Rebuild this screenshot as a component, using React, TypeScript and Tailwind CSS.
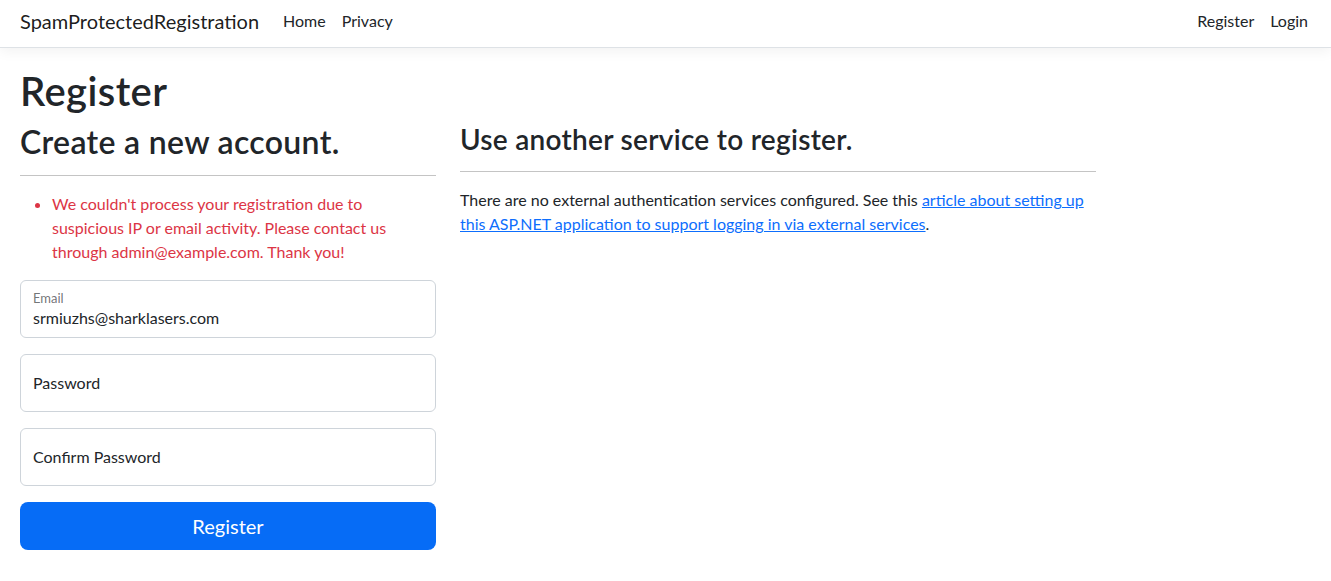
import React from 'react';

const font = { fontFamily: 'Lato, "Noto Sans", "Liberation Sans", sans-serif' };

const FloatingInput: React.FC<{ label: string; value?: string }> = ({ label, value }) => {
    if (value) {
        return (
            <div className="h-[58px] rounded-md border border-[#ced4da] bg-white px-3 pt-[9px]">
                <div className="text-[13px] leading-[16px] text-[#212529a6]">{label}</div>
                <div className="text-base leading-[24px] text-[#212529]">{value}</div>
            </div>
        );
    }
    return (
        <div className="flex h-[58px] items-center rounded-md border border-[#ced4da] bg-white px-3">
            <span className="text-base text-[#212529]">{label}</span>
        </div>
    );
};

export default function App() {
    return (
        <div className="min-h-screen bg-white text-[#212529]" style={font}>
            {/* Navbar */}
            <header className="flex h-[48px] items-center justify-between border-b border-[#dee2e6] bg-white pb-[5px] pl-5 pr-[15px] shadow-[0_4px_12px_rgba(0,0,0,0.05)]">
                <div className="flex items-center">
                    <span className="mr-4 text-[20px] text-black/90">SpamProtectedRegistration</span>
                    <nav className="flex">
                        <a className="px-2 text-base text-[#212529]">Home</a>
                        <a className="px-2 text-base text-[#212529]">Privacy</a>
                    </nav>
                </div>
                <nav className="flex">
                    <a className="px-2 text-base text-[#212529]">Register</a>
                    <a className="px-2 text-base text-[#212529]">Login</a>
                </nav>
            </header>

            <main className="px-5 pt-[19px]">
                <h1 className="text-[40px] font-semibold leading-[48px] tracking-[0.01em]">Register</h1>
                <div className="mt-2 flex gap-6">
                    {/* Left column */}
                    <div className="w-[416px] shrink-0">
                        <h2 className="text-[32px] font-semibold leading-[38px] tracking-[0.01em]">
                            Create a new account.
                        </h2>
                        <hr className="mt-[14px] border-t border-[#c4c4c4]" />
                        <ul className="mt-4 list-disc pl-8 text-base leading-6 text-[#dc3545] marker:text-[#dc3545]">
                            <li>
                                We couldn't process your registration due to suspicious IP or email
                                activity. Please contact us through admin@example.com. Thank you!
                            </li>
                        </ul>
                        <div className="mt-4 flex flex-col gap-4">
                            <FloatingInput label="Email" value="srmiuzhs@sharklasers.com" />
                            <FloatingInput label="Password" />
                            <FloatingInput label="Confirm Password" />
                            <button className="h-12 w-full rounded-lg bg-[#066cf6] text-[20px] text-white">
                                Register
                            </button>
                        </div>
                    </div>

                    {/* Right column */}
                    <div className="w-[636px] shrink-0">
                        <h3 className="-mt-px text-[28px] font-semibold leading-[34px] tracking-[0.01em]">
                            Use another service to register.
                        </h3>
                        <hr className="mt-[15px] border-t border-[#c4c4c4]" />
                        <p className="mt-4 text-base leading-6">
                            There are no external authentication services configured. See this{' '}
                            <a className="text-[#0d6efd] underline">
                                article about setting up this ASP.NET application to support logging in via
                                external services
                            </a>
                            .
                        </p>
                    </div>
                </div>
            </main>
        </div>
    );
}
